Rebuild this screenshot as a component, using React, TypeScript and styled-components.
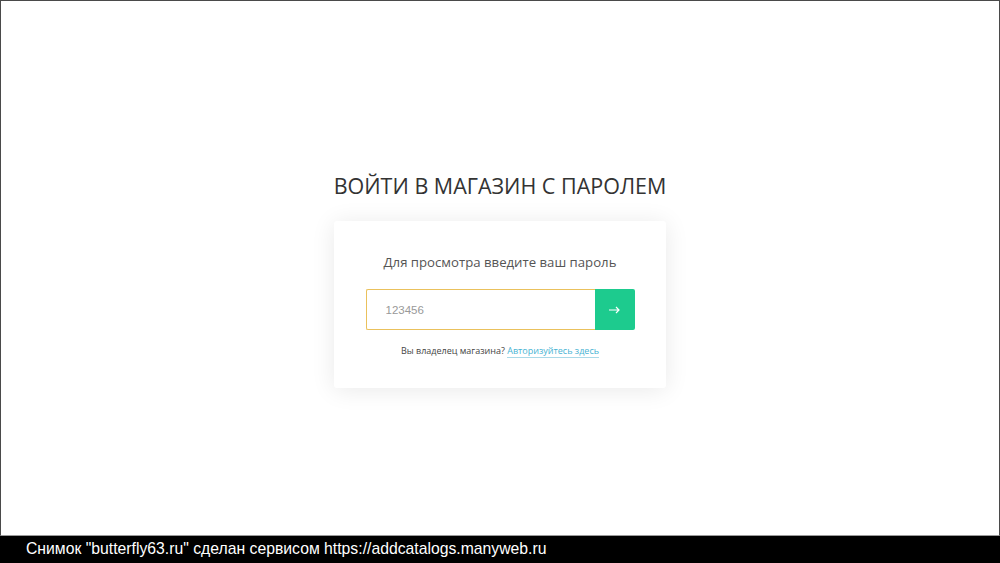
import styled, { createGlobalStyle } from "styled-components";

const GlobalStyle = createGlobalStyle`
  html, body {
    margin: 0;
    padding: 0;
    background: #fff;
  }
  body {
    font-family: "Open Sans", "Noto Sans", sans-serif;
  }
`;

const Screen = styled.div`
  width: 1000px;
  height: 563px;
  display: flex;
  flex-direction: column;
  overflow: hidden;
`;

const Page = styled.main`
  flex: 1;
  border: 1px solid #4a4a4a;
  border-bottom: 1px solid #9a9a9a;
  background: #fff;
  display: flex;
  flex-direction: column;
  align-items: center;
  padding-top: 170px;
  box-sizing: border-box;
`;

const Title = styled.h1`
  margin: 0 0 20px;
  font-size: 21.5px;
  font-weight: 400;
  color: #333;
  line-height: 30px;
`;

const Card = styled.section`
  width: 332px;
  height: 167px;
  box-sizing: border-box;
  background: #fff;
  border-radius: 3px;
  box-shadow: 0 2px 24px rgba(0, 0, 0, 0.09);
  display: flex;
  flex-direction: column;
  align-items: center;
  padding-top: 31px;
`;

const Lead = styled.p`
  margin: 0 0 17px;
  font-size: 13.2px;
  color: #555;
  line-height: 20px;
`;

const Form = styled.form`
  display: flex;
  width: 269px;
  height: 41px;
  margin-bottom: 14px;
`;

const Field = styled.input`
  flex: 1;
  min-width: 0;
  box-sizing: border-box;
  border: 1px solid #eac15c;
  border-right: none;
  border-radius: 2px 0 0 2px;
  padding: 0 0 0 19px;
  font-family: "Liberation Sans", Arial, sans-serif;
  font-size: 11.5px;
  color: #333;
  outline: none;
  &::placeholder {
    color: #999;
  }
`;

const Submit = styled.button`
  width: 40px;
  border: none;
  border-radius: 0 2px 2px 0;
  background: #1dcb8e;
  color: #fff;
  padding: 0;
  cursor: pointer;
  display: flex;
  align-items: center;
  justify-content: center;
`;

const Note = styled.p`
  margin: 0;
  font-size: 9px;
  color: #444;
  line-height: 14px;
`;

const Link = styled.a`
  color: #47b3d3;
  text-decoration: none;
  border-bottom: 1px solid #a9d9e8;
`;

const Caption = styled.footer`
  height: 27px;
  background: #000;
  color: #fff;
  font-family: "Liberation Sans", Arial, sans-serif;
  font-size: 15.75px;
  display: flex;
  align-items: center;
  padding: 0 0 2px 26px;
  box-sizing: border-box;
  flex-shrink: 0;
`;

export default function App() {
  return (
    <Screen>
      <GlobalStyle />
      <Page>
        <Title>ВОЙТИ В МАГАЗИН С ПАРОЛЕМ</Title>
        <Card>
          <Lead>Для просмотра введите ваш пароль</Lead>
          <Form onSubmit={(e) => e.preventDefault()}>
            <Field type="password" placeholder="123456" />
            <Submit type="submit">
              <svg width="11" height="8" viewBox="0 0 11 8" fill="none">
                <path d="M0 4h10M7 1l3 3-3 3" stroke="#fff" strokeWidth="1.2" />
              </svg>
            </Submit>
          </Form>
          <Note>
            Вы владелец магазина? <Link href="#">Авторизуйтесь здесь</Link>
          </Note>
        </Card>
      </Page>
      <Caption>Снимок "butterfly63.ru" сделан сервисом https://addcatalogs.manyweb.ru</Caption>
    </Screen>
  );
}
